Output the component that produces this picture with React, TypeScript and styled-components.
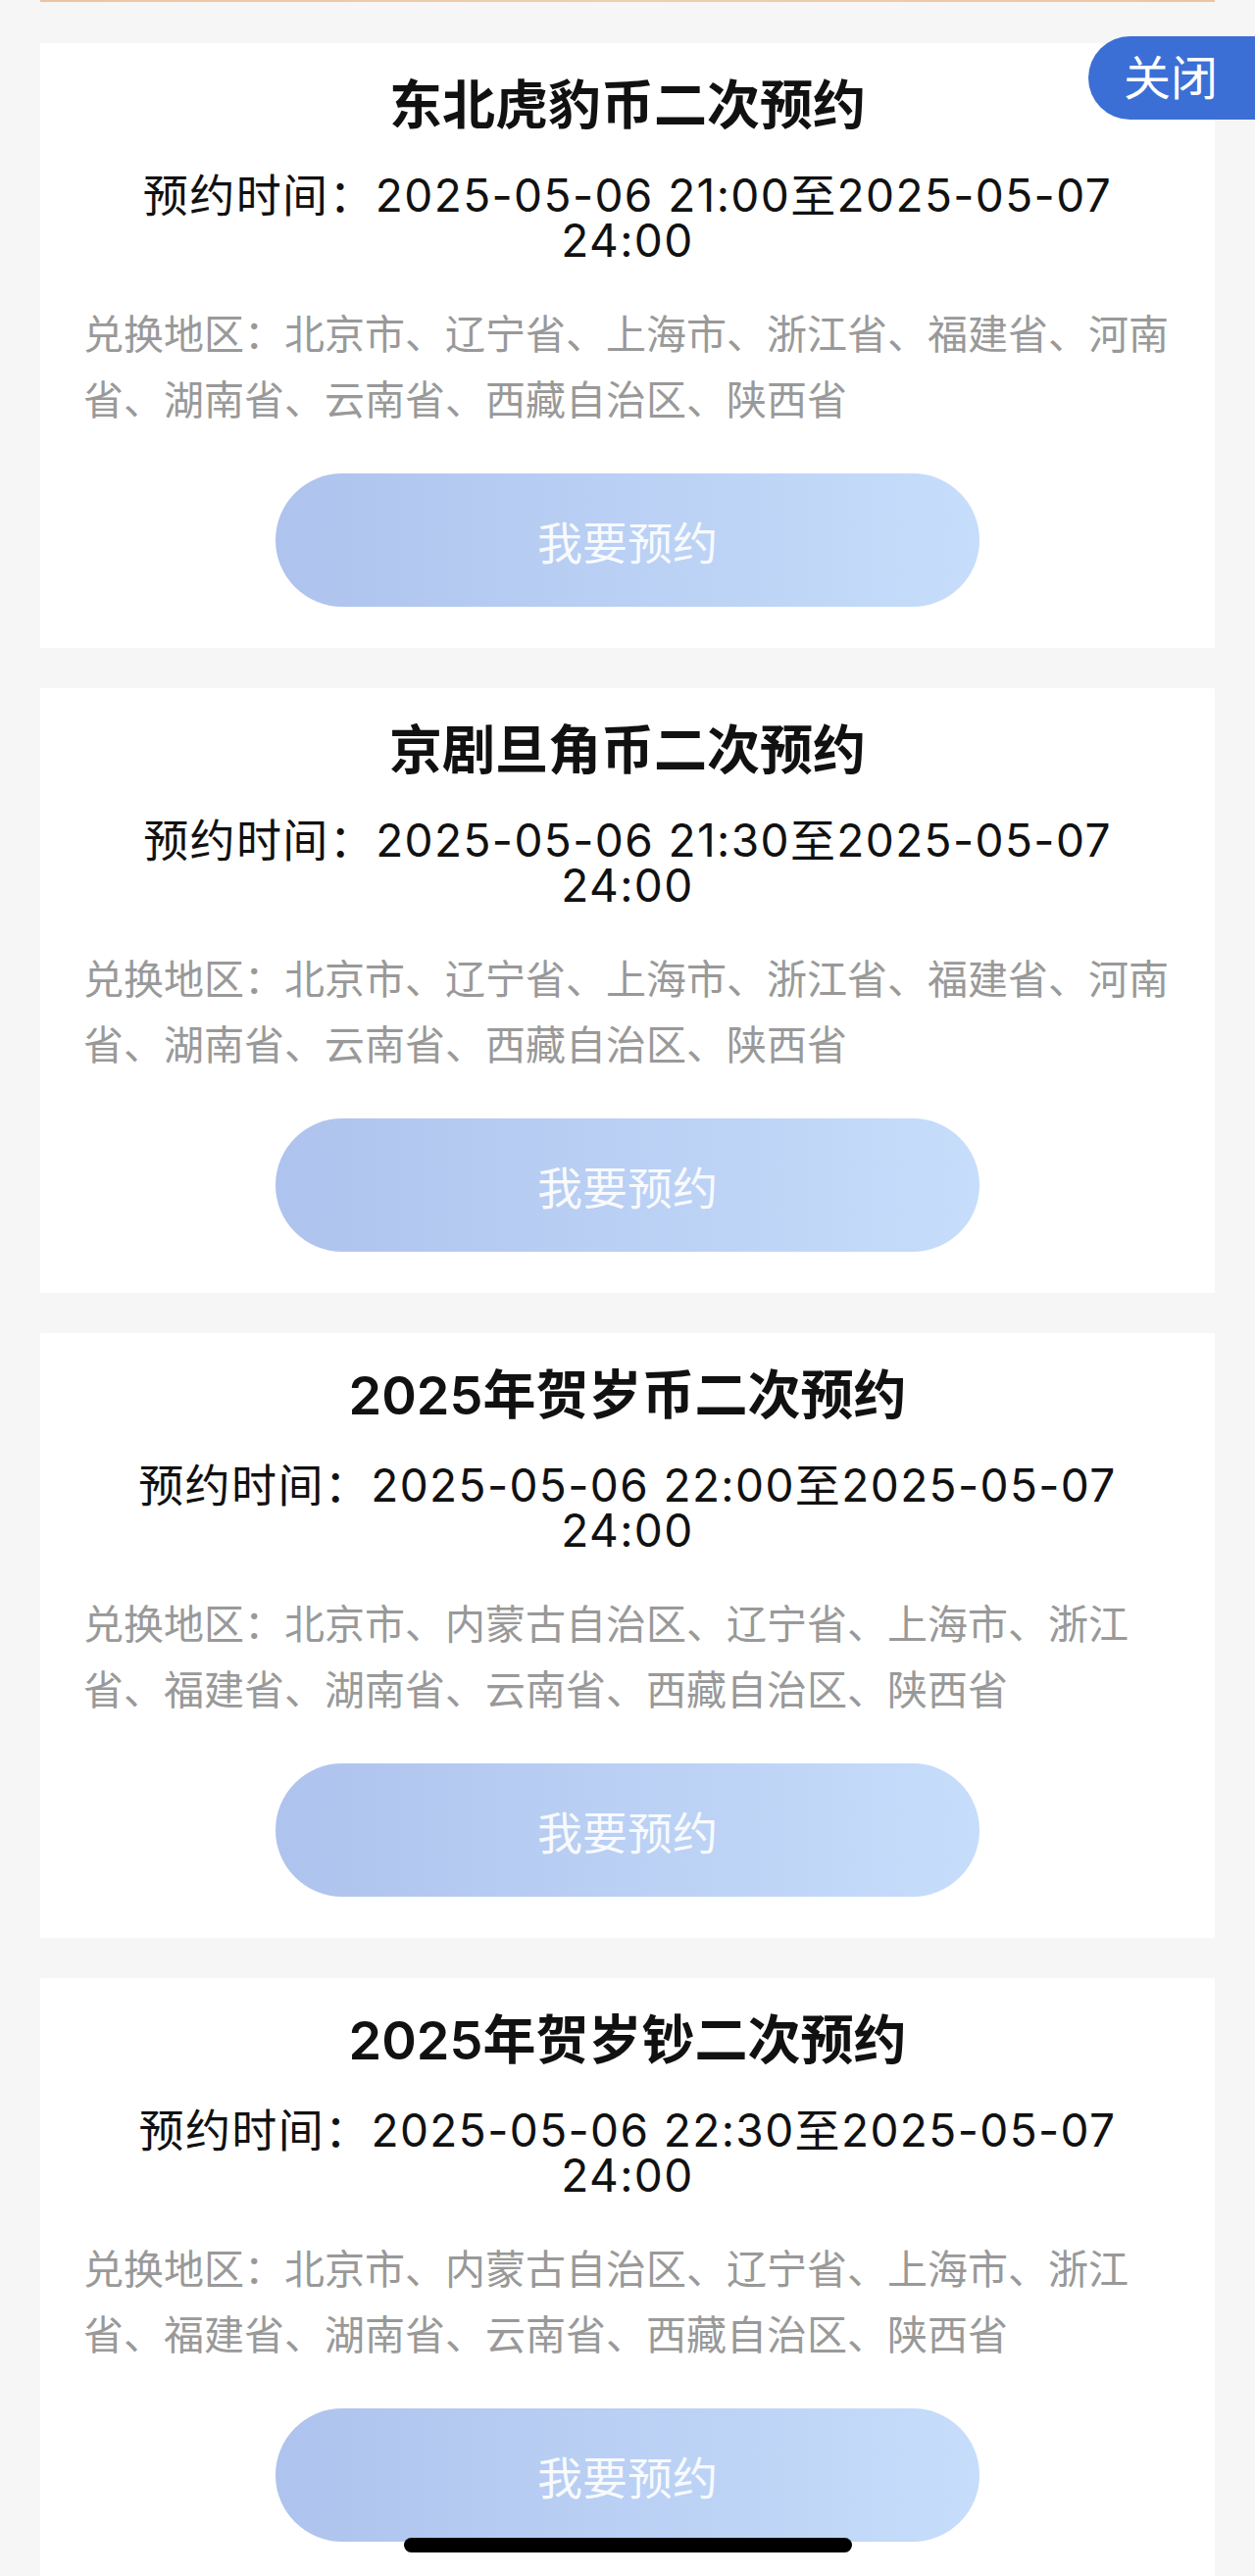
import React from "react";
import styled, { createGlobalStyle } from "styled-components";

const GlobalStyle = createGlobalStyle`
  * { box-sizing: border-box; }
  html, body { margin: 0; padding: 0; background: #f6f6f6; }
  body {
    font-family: "Inter", "Noto Sans CJK SC", "Noto Sans", sans-serif;
    -webkit-font-smoothing: antialiased;
  }
`;

const Page = styled.div`
  padding: 0 41px;
  min-height: 2628px;
`;

const TopEdge = styled.div`
  height: 2px;
  background: linear-gradient(90deg, #eec4a0, #f0cfae 50%, #eec4a0);
`;

const List = styled.div`
  display: flex;
  flex-direction: column;
  gap: 41px;
  margin-top: 42px;
`;

const Card = styled.section`
  background: #ffffff;
  padding: 31px 44px 42px;
  display: flex;
  flex-direction: column;
  align-items: center;
`;

const Title = styled.h2`
  margin: 0;
  font-size: 54px;
  line-height: 65px;
  font-weight: 600;
  color: #111111;
  text-align: center;
`;

const TimeLine = styled.p`
  margin: 36px 0 0;
  font-size: 46px;
  line-height: 46px;
  letter-spacing: 1.4px;
  color: #111111;
  text-align: center;
`;

const TimeRow = styled.span`
  display: block;
`;

const Region = styled.p`
  margin: 40px 0 0;
  align-self: stretch;
  font-size: 41px;
  line-height: 67px;
  color: #999999;
  text-align: left;
`;

const ReserveButton = styled.button`
  margin-top: 41px;
  width: 718px;
  height: 136px;
  border: none;
  border-radius: 68px;
  background: linear-gradient(90deg, #aec3ed 0%, #c6ddfb 100%);
  color: rgba(255, 255, 255, 0.92);
  font-family: inherit;
  font-size: 46px;
  cursor: pointer;
`;

const CloseTab = styled.button`
  position: fixed;
  top: 37px;
  right: 0;
  height: 85px;
  padding: 0 38px 0 36px;
  border: none;
  border-radius: 43px 0 0 43px;
  background: #3c6fd5;
  color: #ffffff;
  font-family: inherit;
  font-size: 48px;
  line-height: 85px;
`;

const HomeIndicator = styled.div`
  position: fixed;
  left: 50%;
  bottom: 24px;
  width: 457px;
  height: 15px;
  margin-left: -228px;
  border-radius: 8px;
  background: #000000;
`;

const regionsA = "北京市、辽宁省、上海市、浙江省、福建省、河南省、湖南省、云南省、西藏自治区、陕西省";
const regionsB = "北京市、内蒙古自治区、辽宁省、上海市、浙江省、福建省、湖南省、云南省、西藏自治区、陕西省";

const items = [
  { title: "东北虎豹币二次预约", start: "2025-05-06 21:00", regions: regionsA },
  { title: "京剧旦角币二次预约", start: "2025-05-06 21:30", regions: regionsA },
  { title: "2025年贺岁币二次预约", start: "2025-05-06 22:00", regions: regionsB },
  { title: "2025年贺岁钞二次预约", start: "2025-05-06 22:30", regions: regionsB },
];

export default function App() {
  return (
    <>
      <GlobalStyle />
      <Page>
        <TopEdge />
        <List>
          {items.map((it) => (
            <Card key={it.title}>
              <Title>{it.title}</Title>
              <TimeLine>
                <TimeRow>预约时间：{it.start}至2025-05-07</TimeRow>
                <TimeRow>24:00</TimeRow>
              </TimeLine>
              <Region>兑换地区：{it.regions}</Region>
              <ReserveButton>我要预约</ReserveButton>
            </Card>
          ))}
        </List>
      </Page>
      <CloseTab>关闭</CloseTab>
      <HomeIndicator />
    </>
  );
}
